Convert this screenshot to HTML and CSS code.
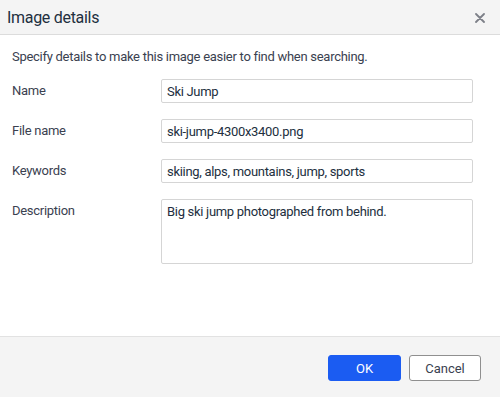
FILE: index.html
```html
<!DOCTYPE html>
<html>
<head>
<meta charset="utf-8">
<link rel="stylesheet" href="styles.css">
</head>
<body>
<div class="dialog">
  <div class="header">
    <div class="title">Image details</div>
    <button class="close" aria-label="Close">
      <svg width="10" height="10" viewBox="0 0 10 10"><path d="M1 1L9 9M9 1L1 9" stroke="#7d8088" stroke-width="1.8" stroke-linecap="round"/></svg>
    </button>
  </div>
  <div class="content">
    <p class="intro">Specify details to make this image easier to find when searching.</p>
    <div class="form">
      <label class="label">Name</label>
      <input class="field" type="text" value="Ski Jump">
      <label class="label">File name</label>
      <input class="field" type="text" value="ski-jump-4300x3400.png">
      <label class="label">Keywords</label>
      <input class="field" type="text" value="skiing, alps, mountains, jump, sports">
      <label class="label">Description</label>
      <textarea class="field area">Big ski jump photographed from behind.</textarea>
    </div>
  </div>
  <div class="footer">
    <button class="btn primary">OK</button>
    <button class="btn secondary">Cancel</button>
  </div>
</div>
</body>
</html>
```

FILE: styles.css
```css
html, body {
  margin: 0;
  padding: 0;
  background: #fff;
}
.dialog {
  width: 500px;
  height: 397px;
  display: flex;
  flex-direction: column;
  font-family: Roboto, "Liberation Sans", sans-serif;
  color: #222f3e;
}
.header {
  height: 34px;
  background: #f4f4f4;
  border-bottom: 1px solid #dcdcdc;
  display: flex;
  align-items: center;
  justify-content: space-between;
  padding: 0 14px 0 7px;
}
.title {
  font-size: 16px;
  letter-spacing: -0.3px;
  color: #222f3e;
}
.close {
  border: 0;
  background: none;
  padding: 0;
  width: 12px;
  height: 12px;
  display: flex;
  align-items: center;
  justify-content: center;
  margin-top: 1px;
}
.content {
  flex: 1;
  padding: 12px 27px 0 12px;
}
.intro {
  margin: 0 0 12px;
  font-size: 13px;
  line-height: 20px;
  letter-spacing: -0.28px;
  color: #3a4150;
}
.form {
  display: grid;
  grid-template-columns: 149px 1fr;
  row-gap: 16px;
  align-items: start;
}
.label {
  font-size: 13px;
  line-height: 24px;
  letter-spacing: -0.28px;
  color: #3a4150;
}
.field {
  box-sizing: border-box;
  height: 24px;
  width: 100%;
  margin: 0;
  border: 1px solid #d5d5d5;
  border-radius: 2px;
  padding: 0 5px;
  font-family: Roboto, "Liberation Sans", sans-serif;
  font-size: 13px;
  letter-spacing: -0.3px;
  color: #222f3e;
  background: #fff;
}
.area {
  height: 65px;
  padding: 4px 5px;
  resize: none;
  line-height: 16px;
  overflow: hidden;
}
.footer {
  height: 61px;
  box-sizing: border-box;
  background: #f4f4f4;
  border-top: 1px solid #e2e2e2;
  display: flex;
  justify-content: flex-end;
  align-items: flex-start;
  gap: 8px;
  padding: 18px 19px 0 0;
}
.btn {
  box-sizing: border-box;
  height: 26px;
  width: 73px;
  border-radius: 3px;
  font-family: Roboto, "Liberation Sans", sans-serif;
  font-size: 13px;
  padding: 0;
}
.primary {
  background: #1b5cf2;
  border: 1px solid #1b5cf2;
  color: #fff;
}
.secondary {
  width: 72px;
  background: #fff;
  border: 1px solid #8f8f8f;
  color: #3a4150;
}
```
